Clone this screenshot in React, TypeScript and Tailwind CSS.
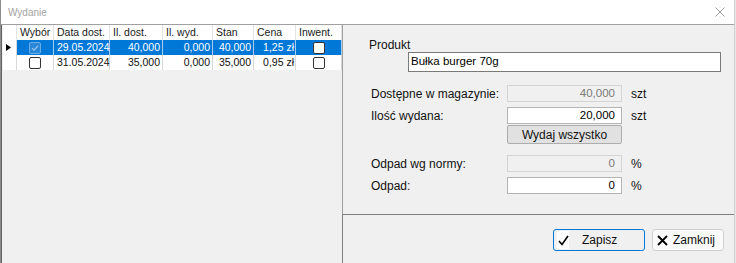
import React from "react";

const font = { fontFamily: '"Liberation Sans", Arial, sans-serif' };

const cols = [14, 37, 56, 53, 50, 41, 42, 46];
const gridCols = "grid grid-cols-[14px_37px_56px_53px_50px_41px_42px_46px]";

function Check({ checked, selected }: { checked?: boolean; selected?: boolean }) {
  if (checked && selected) {
    return (
      <div className="w-[12px] h-[12px] rounded-[2px] border border-[#6aaee6] bg-[#2a87d8] flex items-center justify-center">
        <svg width="8" height="8" viewBox="0 0 8 8">
          <path d="M1 4.2 L3.1 6.2 L7 1.8" fill="none" stroke="#9cc8ee" strokeWidth="1.1" />
        </svg>
      </div>
    );
  }
  return <div className="w-[12px] h-[12px] rounded-[2px] border border-[#333333] bg-white" />;
}

const rows = [
  { sel: true, wyb: true, data: "29.05.2024", dost: "40,000", wyd: "0,000", stan: "40,000", cena: "1,25 zł" },
  { sel: false, wyb: false, data: "31.05.2024", dost: "35,000", wyd: "0,000", stan: "35,000", cena: "0,95 zł" },
];

function Grid() {
  const head = ["", "Wybór", "Data dost.", "Il. dost.", "Il. wyd.", "Stan", "Cena", "Inwent."];
  return (
    <div className="text-[10.5px] leading-none">
      <div className={`${gridCols} h-[15px] bg-white text-[#1a1a1a]`}>
        {head.map((h, i) => (
          <div
            key={i}
            className="flex items-center pl-[3px] border-r border-[#e3e3e3] whitespace-nowrap overflow-hidden"
          >
            {h}
          </div>
        ))}
      </div>
      {rows.map((r, i) => {
        const cell = r.sel
          ? "bg-[#0078d7] text-white border-r border-[#a9cdef]"
          : "bg-white text-[#111111] border-r border-[#d8d8d8]";
        return (
          <div key={i} className={`${gridCols} h-[15px]`}>
            <div className="bg-white border-r border-[#d8d8d8] flex items-center pl-[3px]">
              {r.sel && (
                <svg width="5" height="7" viewBox="0 0 5 7">
                  <polygon points="0,0 5,3.5 0,7" fill="#000" />
                </svg>
              )}
            </div>
            <div className={`${cell} flex items-center justify-center`}>
              <Check checked={r.wyb} selected={r.sel} />
            </div>
            <div className={`${cell} flex items-center pl-[3px]`}>{r.data}</div>
            <div className={`${cell} flex items-center justify-end pr-[2px]`}>{r.dost}</div>
            <div className={`${cell} flex items-center justify-end pr-[2px]`}>{r.wyd}</div>
            <div className={`${cell} flex items-center justify-end pr-[2px]`}>{r.stan}</div>
            <div className={`${cell} flex items-center justify-end pr-[1px] whitespace-nowrap overflow-hidden`}>
              {r.cena}
            </div>
            <div className={`${cell} flex items-center justify-center`}>
              <Check />
            </div>
          </div>
        );
      })}
    </div>
  );
}

function Field({
  label,
  value,
  unit,
  disabled,
  className,
}: {
  label: string;
  value: string;
  unit: string;
  disabled?: boolean;
  className?: string;
}) {
  return (
    <div className={`flex items-center h-[17px] pl-[28px] ${className ?? ""}`}>
      <div className="w-[136px] text-[12px] text-[#111111] whitespace-nowrap">{label}</div>
      <div
        className={`w-[115px] h-full flex items-center justify-end pr-[6px] text-[11.5px] ${
          disabled
            ? "bg-[#f0f0f0] border border-[#d4d4d4] text-[#7a7a7a]"
            : "bg-white border border-[#b4b4b4] text-black"
        }`}
      >
        {value}
      </div>
      <div className="ml-[9px] text-[12px] text-[#111111]">{unit}</div>
    </div>
  );
}

export default function App() {
  return (
    <div className="w-[736px] h-[263px] bg-white overflow-hidden flex" style={font}>
      <div className="w-[734px] h-full flex flex-col border-l border-[#8c8c8c] rounded-tr-[6px]">
        <div className="h-[24px] bg-white flex items-center justify-between pl-[7px] pr-[9px]">
          <span className="text-[10px] text-[#a3a3a3]">Wydanie</span>
          <svg width="10" height="10" viewBox="0 0 10 10">
            <path d="M0.5 0.5 L9.5 9.5 M9.5 0.5 L0.5 9.5" stroke="#9a9a9a" strokeWidth="1" />
          </svg>
        </div>
        <div className="flex-1 flex bg-[#f0f0f0] border-t border-[#a0a0a0]">
          <div className="w-[341px] pl-[1px] border-l border-[#646464]">
            <Grid />
          </div>
          <div className="flex-1 flex flex-col border-l border-[#a0a0a0]">
            <div className="h-[189px] flex flex-col">
              <div className="mt-[13px] ml-[26px] text-[12px] leading-[14px] text-[#111111]">Produkt</div>
              <div className="ml-[65px] w-[313px] h-[20px] bg-white border border-[#7a7a7a] flex items-center pl-[2px] text-[11.5px] text-black">
                Bułka burger 70g
              </div>
              <Field className="mt-[13px]" label="Dostępne w magazynie:" value="40,000" unit="szt" disabled />
              <Field className="mt-[5px]" label="Ilość wydana:" value="20,000" unit="szt" />
              <button className="ml-[164px] mt-[1px] w-[115px] h-[19px] bg-[#e1e1e1] border border-[#adadad] rounded-[2px] text-[12px] text-[#111111] flex items-center justify-center">
                Wydaj wszystko
              </button>
              <Field className="mt-[11px]" label="Odpad wg normy:" value="0" unit="%" disabled />
              <Field className="mt-[5px]" label="Odpad:" value="0" unit="%" />
            </div>
            <div className="flex-1 border-t border-l border-[#7f7f7f] -ml-[1px] flex justify-end items-start pt-[14px] pr-[10px] gap-[7px]">
              <button className="w-[92px] h-[22px] border border-[#0078d7] rounded-[3px] bg-[#f0f0f0] flex items-center pl-[3px] text-[12px] text-[#111111]">
                <span className="w-[12px] h-[18px] bg-white flex items-center justify-center">
                  <svg width="11" height="11" viewBox="0 0 11 11">
                    <path d="M1 6 L4 9.5 L10 1" fill="none" stroke="#000" strokeWidth="1.6" />
                  </svg>
                </span>
                <span className="ml-[13px]">Zapisz</span>
              </button>
              <button className="w-[72px] h-[22px] border border-[#d0d0d0] rounded-[3px] bg-[#fafafa] flex items-center pl-[4px] text-[12px] text-[#111111]">
                <svg width="11" height="11" viewBox="0 0 11 11">
                  <path d="M1 1 L10 10 M10 1 L1 10" stroke="#000" strokeWidth="1.8" />
                </svg>
                <span className="ml-[5px]">Zamknij</span>
              </button>
            </div>
          </div>
        </div>
      </div>
      <div className="flex-1 bg-[#e8e8e8] border-l border-[#cfcfcf]" />
    </div>
  );
}
